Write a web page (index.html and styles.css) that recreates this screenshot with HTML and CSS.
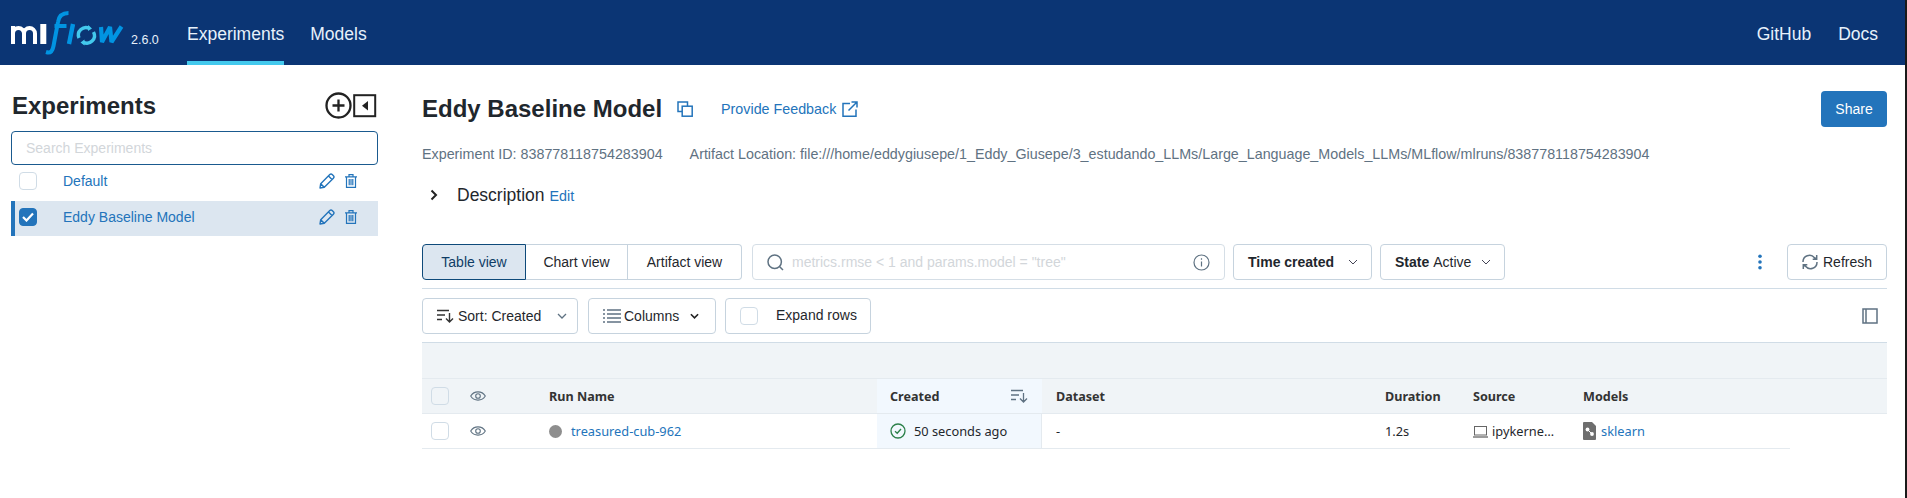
FILE: index.html
```html
<!DOCTYPE html>
<html lang="en">
<head>
<meta charset="utf-8">
<title>MLflow</title>
<link rel="stylesheet" href="styles.css">
</head>
<body>
<div class="page">
<header class="topbar">
  <svg class="logo" width="115" height="46" viewBox="0 0 115 46" fill="none">
    <path d="M2 16V34M2 23.500a5.500 5.500 0 0 1 11 0V34M13 23.500a5.500 5.500 0 0 1 11 0V34" stroke="#fff" stroke-width="4"/>
    <path d="M32.300 14V34" stroke="#fff" stroke-width="6"/>
    <path d="M35 42c5 1.500 6.500-1 7.500-6l4.500-24c1-7 5-9 10.500-9M43.500 16h12" stroke="#0194e2" stroke-width="4"/>
    <path d="M62 14l-4 20" stroke="#0194e2" stroke-width="4.400"/>
    <path d="M68 28a7.500 7.500 0 0 1 10.500-9.500M82.500 22a7.500 7.500 0 0 1-10.500 10" stroke="#43c9ed" stroke-width="3.400"/>
    <path d="M77 15l4 3.500-4 2.500zM73.500 29.500l-4 3 4 3z" fill="#43c9ed"/>
    <path d="M90 17l1 15 8-15 1.500 15 10-15.500" stroke="#0194e2" stroke-width="4.200" stroke-linejoin="bevel"/>
  </svg>
  <span class="version">2.6.0</span>
  <nav class="tabs">
    <a class="tab tab-active">Experiments</a>
    <a class="tab">Models</a>
  </nav>
  <nav class="tabs tabs-right">
    <a class="tab">GitHub</a>
    <a class="tab">Docs</a>
  </nav>
</header>
<div class="app">
  <aside class="sidebar">
    <div class="side-head">
      <h2 class="side-title">Experiments</h2>
      <svg class="side-plus" width="27" height="27" viewBox="0 0 27 27" fill="none" stroke="#222">
        <circle cx="13.500" cy="13.500" r="12" stroke-width="2.300"/>
        <path d="M13.500 7.500v12M7.500 13.500h12" stroke-width="2.300"/>
      </svg>
      <svg class="side-collapse" width="24" height="24" viewBox="0 0 24 24">
        <rect x="1.200" y="1.200" width="21" height="21" fill="none" stroke="#222" stroke-width="2"/>
        <path d="M15 7v9.500L9 11.700z" fill="#222"/>
      </svg>
    </div>
    <div class="side-search">Search Experiments</div>
    <div class="exp-row exp-first">
      <span class="check"></span>
      <a class="exp-name">Default</a>
      <svg class="pencil" width="16" height="16" viewBox="0 0 16 16" fill="none" stroke="#2374bb" stroke-width="1.400" stroke-linejoin="round"><path d="M1 15l.7-4.300L10.800 1.600a1.700 1.700 0 0 1 2.400 0l1.200 1.200a1.700 1.700 0 0 1 0 2.400L5.300 14.300zM1.700 10.700l3.600 3.600M9.500 3l3.500 3.500"/></svg>
      <svg class="trash" width="12" height="14" viewBox="0 0 12 14" fill="none" stroke="#2374bb" stroke-width="1.200"><path d="M0 2.800h12M4 2.800V.7h4v2.100M1.500 2.800V13.300h9V2.800M4.200 5v6.300M6 5v6.300M7.800 5v6.300"/></svg>
    </div>
    <div class="exp-row exp-active">
      <span class="check check-on"><svg width="12" height="10" viewBox="0 0 12 10" fill="none" stroke="#fff" stroke-width="2.200"><path d="M1 5l3.500 3.500L11 1.500"/></svg></span>
      <a class="exp-name">Eddy Baseline Model</a>
      <svg class="pencil" width="16" height="16" viewBox="0 0 16 16" fill="none" stroke="#2374bb" stroke-width="1.400" stroke-linejoin="round"><path d="M1 15l.7-4.300L10.800 1.600a1.700 1.700 0 0 1 2.400 0l1.200 1.200a1.700 1.700 0 0 1 0 2.400L5.300 14.300zM1.700 10.700l3.600 3.600M9.500 3l3.500 3.500"/></svg>
      <svg class="trash" width="12" height="14" viewBox="0 0 12 14" fill="none" stroke="#2374bb" stroke-width="1.200"><path d="M0 2.800h12M4 2.800V.7h4v2.100M1.500 2.800V13.300h9V2.800M4.200 5v6.300M6 5v6.300M7.800 5v6.300"/></svg>
    </div>
  </aside>
  <main class="main">
    <div class="title-row">
      <h1 class="title">Eddy Baseline Model</h1>
      <svg class="copy" width="16" height="16" viewBox="0 0 16 16" fill="none" stroke="#2374bb" stroke-width="1.500"><path d="M10.500 5V1H1v9.500h4"/><rect x="5.200" y="5.200" width="10" height="10"/></svg>
      <a class="feedback">Provide Feedback</a>
      <svg class="ext" width="16" height="16" viewBox="0 0 16 16" fill="none" stroke="#2374bb" stroke-width="1.500"><path d="M8 2.500H1v12.700h13V8.500M6.500 9.500L15 1M9.500 1H15v5.500"/></svg>
      <button class="share">Share</button>
    </div>
    <div class="meta">
      <span>Experiment ID: 838778118754283904</span>
      <span>Artifact Location: file:///home/eddygiusepe/1_Eddy_Giusepe/3_estudando_LLMs/Large_Language_Models_LLMs/MLflow/mlruns/838778118754283904</span>
    </div>
    <div class="desc">
      <svg class="desc-chev" width="8" height="12" viewBox="0 0 8 12" fill="none" stroke="#222" stroke-width="2"><path d="M1.500 1.500L6 6l-4.500 4.500"/></svg>
      <span class="desc-label">Description</span>
      <a class="desc-edit">Edit</a>
    </div>
    <div class="toolbar">
      <div class="segs">
        <span class="seg seg-on">Table view</span>
        <span class="seg">Chart view</span>
        <span class="seg">Artifact view</span>
      </div>
      <div class="filter">
        <svg width="17" height="17" viewBox="0 0 17 17" fill="none" stroke="#5f7282" stroke-width="1.500"><circle cx="7.700" cy="7.700" r="6.700"/><path d="M12.500 12.500L16 16"/></svg>
        <span class="filter-text">metrics.rmse &lt; 1 and params.model = "tree"</span>
        <svg class="filter-info" width="17" height="17" viewBox="0 0 17 17" fill="none" stroke="#5f7282" stroke-width="1.200"><circle cx="8.500" cy="8.500" r="7.500"/><path d="M8.500 7.500v5M8.500 4.300v1.500"/></svg>
      </div>
      <div class="btn btn-time"><b>Time created</b><svg class="chev" width="10" height="6" viewBox="0 0 10 6" fill="none" stroke="#445"><path d="M1 1l4 4 4-4"/></svg></div>
      <div class="btn btn-state"><b>State</b><span>Active</span><svg class="chev" width="10" height="6" viewBox="0 0 10 6" fill="none" stroke="#445"><path d="M1 1l4 4 4-4"/></svg></div>
      <svg class="kebab" width="4" height="16" viewBox="0 0 4 16" fill="#2374bb"><circle cx="2" cy="2.200" r="1.800"/><circle cx="2" cy="8" r="1.800"/><circle cx="2" cy="13.800" r="1.800"/></svg>
      <div class="btn btn-refresh">
        <svg width="16" height="16" viewBox="0 0 16 16" fill="none" stroke="#5f7282" stroke-width="1.500"><path d="M1 8a6.500 6.500 0 0 1 11.500-4.300L14.500 5M15 8a6.500 6.500 0 0 1-11.500 4.300L1.500 11M14.700 1v4.300h-4M1.300 15v-4.300h4"/></svg>
        Refresh
      </div>
    </div>
    <div class="toolbar2">
      <div class="btn btn-sort">
        <svg width="17" height="14" viewBox="0 0 17 14" fill="none" stroke="#333" stroke-width="1.400"><path d="M0 1.500h12M0 6h8M0 10.500h5M12.500 4v9M9 9.500l3.500 3.500 3.500-3.500"/></svg>
        <span class="sort-label">Sort: Created</span>
        <svg class="chev" width="10" height="6" viewBox="0 0 10 6" fill="none" stroke="#5f7282" stroke-width="1.300"><path d="M1 1l4 4 4-4"/></svg>
      </div>
      <div class="btn btn-cols">
        <svg width="18" height="14" viewBox="0 0 18 14" fill="none" stroke="#5f7282" stroke-width="1.500"><path d="M4 1h14M4 5h14M4 9h14M4 13h14M0 1h2M0 5h2M0 9h2M0 13h2"/></svg>
        <span class="cols-label">Columns</span>
        <svg width="9" height="6" viewBox="0 0 10 6" fill="none" stroke="#222" stroke-width="1.800"><path d="M1 1l4 4 4-4"/></svg>
      </div>
      <div class="btn btn-expand">
        <span class="check"></span>
        <span class="expand-label">Expand rows</span>
      </div>
      <svg class="panel" width="16" height="16" viewBox="0 0 16 16" fill="none" stroke="#5f7282" stroke-width="1.500"><rect x="1" y="1" width="14" height="14"/><path d="M4 1v14"/></svg>
    </div>
    <div class="table">
      <div class="band"></div>
      <div class="row row-head">
        <div class="cell"><span class="check check-head"></span></div>
        <div class="cell"><svg class="eye" width="16" height="12" viewBox="0 0 16 12" fill="none" stroke="#5f7282" stroke-width="1.100"><path d="M.7 6C4 .5 12 .5 15.300 6 12 11.500 4 11.500.7 6z"/><circle cx="8" cy="6" r="2.300"/></svg></div>
        <div class="cell cell-h">Run Name</div>
        <div class="cell cell-h cell-created">Created
          <svg class="sort-h" width="17" height="14" viewBox="0 0 17 14" fill="none" stroke="#5f7282" stroke-width="1.300"><path d="M0 1.500h12M0 6h8M0 10.500h5M12.500 4v9M9 9.500l3.500 3.500 3.500-3.500"/></svg>
        </div>
        <div class="cell cell-h cell-ds">Dataset</div>
        <div class="cell cell-h">Duration</div>
        <div class="cell cell-h">Source</div>
        <div class="cell cell-h">Models</div>
      </div>
      <div class="row row-body">
        <div class="cell"><span class="check"></span></div>
        <div class="cell"><svg class="eye" width="16" height="12" viewBox="0 0 16 12" fill="none" stroke="#5f7282" stroke-width="1.100"><path d="M.7 6C4 .5 12 .5 15.300 6 12 11.500 4 11.500.7 6z"/><circle cx="8" cy="6" r="2.300"/></svg></div>
        <div class="cell"><span class="dot"></span><a class="link">treasured-cub-962</a></div>
        <div class="cell cell-created cell-created-b">
          <svg width="16" height="16" viewBox="0 0 16 16" fill="none" stroke="#2b8049" stroke-width="1.300"><circle cx="8" cy="8" r="7"/><path d="M5 8.300l2.200 2L11 6"/></svg>
          <span>50 seconds ago</span>
        </div>
        <div class="cell cell-ds">-</div>
        <div class="cell">1.2s</div>
        <div class="cell">
          <svg class="laptop" width="15" height="13" viewBox="0 0 15 13" fill="none" stroke="#666"><rect x="1.500" y="1.500" width="12" height="8.500"/><path d="M0 12h15" stroke-width="1.300"/></svg>
          <span>ipykerne…</span>
        </div>
        <div class="cell">
          <svg class="model" width="13" height="18" viewBox="0 0 13 18"><path d="M1 0h8l4 4v13a1 1 0 0 1-1 1H1a1 1 0 0 1-1-1V1a1 1 0 0 1 1-1z" fill="#6e6e6e"/><g fill="#fff"><circle cx="4.500" cy="7.500" r="1.900"/><circle cx="9" cy="12" r="1.900"/></g><path d="M4.500 7.500L9 12" stroke="#fff"/></svg>
          <a class="link">sklearn</a>
        </div>
      </div>
    </div>
  </main>
</div>
</div>
</body>
</html>
```

FILE: styles.css
```css
* { box-sizing: border-box; }
html, body { margin: 0; padding: 0; }
body {
  width: 1907px;
  height: 498px;
  overflow: hidden;
  background: #1a1a1a;
  font-family: "Liberation Sans", Arial, sans-serif;
  font-size: 14px;
  color: #1f272d;
}
.page { width: 1905px; height: 498px; background: #fff; }
.topbar {
  height: 65px;
  background: #0b3574;
  display: flex;
  align-items: stretch;
  padding-left: 11px;
  color: #e7f1fb;
}
.logo { margin-top: 10px; }
.version { font-size: 12.500px; margin: 33px 0 0 5px; width: 29px; }
.tabs { display: flex; gap: 26px; margin-left: 27px; }
.tabs-right { margin-left: auto; padding-right: 27px; gap: 27px; }
.tab {
  font-size: 17.500px;
  height: 65px;
  padding-top: 8px;
  display: flex;
  align-items: center;
  border-bottom: 4px solid transparent;
}
.tab-active { border-bottom-color: #43c9ed; }

.app { display: flex; }
.sidebar { width: 422px; padding: 26px 44px 0 11px; flex: none; }
.side-head { display: flex; align-items: center; height: 27px; margin-bottom: 13px; padding-left: 1px; }
.side-title { margin: 0; font-size: 24px; font-weight: 700; line-height: 27px; flex: 1; position: relative; top: 1px; }
.side-plus { margin-right: 1px; margin-top: 2px; }
.side-collapse { margin-right: 1px; margin-top: 2px; }
.side-search {
  height: 34px;
  border: 1px solid #1a5a8f;
  border-radius: 4px;
  padding-left: 14px;
  line-height: 32px;
  color: #d2d6da;
}
.exp-row {
  display: flex;
  align-items: center;
  padding-left: 8px;
}
.exp-first { height: 36px; padding-bottom: 5px; }
.exp-active {
  height: 35px;
  padding-bottom: 3px;
  background: #dce6f0;
  border-left: 4px solid #2374bb;
  padding-left: 4px;
}
.check {
  width: 18px;
  height: 18px;
  border: 1px solid #d0dce6;
  border-radius: 4px;
  background: #fff;
  flex: none;
  display: inline-flex;
  align-items: center;
  justify-content: center;
}
.check-on { background: #2374bb; border-color: #2374bb; }
.exp-name { color: #2374bb; margin-left: 26px; flex: 1; }
.pencil { margin-right: 10px; }
.trash { margin-right: 21px; }

.main { flex: 1; min-width: 0; padding: 26px 18px 0 0; }
.title-row { display: flex; align-items: center; height: 36px; }
.title { margin: 0; font-size: 24px; font-weight: 700; }
.copy { margin-left: 15px; }
.feedback { color: #2374bb; margin-left: 28px; font-size: 14.300px; }
.ext { margin-left: 6px; }
.share {
  margin-left: auto;
  width: 66px;
  height: 36px;
  border: 0;
  border-radius: 4px;
  background: #2374bb;
  color: #fff;
  font: 14px "Liberation Sans", Arial, sans-serif;
}
.meta {
  display: flex;
  gap: 27px;
  margin-top: 19px;
  height: 16px;
  line-height: 16px;
  color: #5f7282;
  font-size: 14.300px;
  white-space: nowrap;
}
.desc { display: flex; align-items: center; height: 24px; margin-top: 21px; padding-left: 8px; }
.desc-label { font-size: 17.500px; margin-left: 19px; }
.desc-edit { color: #2374bb; margin-left: 5px; font-size: 14.300px; position: relative; top: 1px; }
.toolbar {
  display: flex;
  align-items: center;
  height: 45px;
  padding-bottom: 8px;
  margin-top: 37px;
  border-bottom: 1px solid #d0dce6;
}
.segs { display: flex; height: 36px; border-radius: 4px; }
.seg {
  display: flex;
  align-items: center;
  justify-content: center;
  border: 1px solid #c6d3de;
  border-left-width: 0;
}
.seg:nth-child(1) { width: 104px; border-left-width: 1px; border-radius: 4px 0 0 4px; }
.seg:nth-child(2) { width: 102px; }
.seg:nth-child(3) { width: 114px; border-radius: 0 4px 4px 0; }
.seg-on { background: #dce6f0; border-color: #0e4a7a; color: #0f3d66; }
.filter {
  width: 473px;
  height: 36px;
  margin-left: 10px;
  border: 1px solid #d5dee6;
  border-radius: 4px;
  display: flex;
  align-items: center;
  padding: 0 14px 0 14px;
}
.filter-text { flex: 1; color: #d2d6da; margin-left: 8px; }
.btn {
  height: 36px;
  border: 1px solid #c6d3de;
  border-radius: 4px;
  display: flex;
  align-items: center;
  flex: none;
  background: #fff;
}
.btn-time { width: 139px; margin-left: 8px; padding-left: 14px; }
.btn-state { width: 125px; margin-left: 8px; padding-left: 14px; }
.btn-state b { margin-right: 4px; }
.chev { margin-left: auto; margin-right: 13px; flex: none; }
.kebab { margin-left: auto; margin-right: 25px; }
.btn-refresh { width: 100px; padding-left: 14px; gap: 5px; }
.toolbar2 { display: flex; align-items: center; height: 35px; margin-top: 9px; }
.btn-sort { width: 156px; padding-left: 14px; }
.sort-label { margin-left: 4px; }
.btn-sort .chev { margin-right: 10px; }
.btn-cols { width: 128px; margin-left: 10px; padding-left: 14px; }
.cols-label { margin-left: 3px; margin-right: 11px; }
.btn-expand { width: 146px; margin-left: 9px; padding-left: 14px; }
.expand-label { margin-left: 18px; position: relative; top: -1px; }
.panel { margin-left: auto; margin-right: 9px; }
.table { margin-top: 9px; font-family: "Noto Sans", sans-serif; font-size: 12.800px; }
.band { height: 36px; background: #f0f4f7; border-top: 1px solid #d0dce6; }
.row {
  display: grid;
  grid-template-columns: 48px 69px 338px 165px 333px 88px 110px 217px;
  height: 36px;
}
.row-head { background: #f0f4f7; border-top: 1px solid #e4eaef; border-bottom: 1px solid #e4eaef; }
.row-body { width: 1368px; height: 35px; border-bottom: 1px solid #e4eaef; }
.cell { display: flex; align-items: center; padding-left: 10px; white-space: nowrap; }
.cell:first-child { padding-left: 9px; }
.cell:nth-child(2) { padding-left: 0; }
.cell-h { font-weight: 700; color: #333; font-size: 12.600px; }
.cell-created { background: #f2f8fe; padding-left: 13px; }
.cell-created-b { gap: 8px; border-right: 1px solid #e4eaef; }
.cell-ds { padding-left: 14px; }
.check-head { background: #f0f4f7; }
.sort-h { margin-left: auto; margin-right: 14px; }
.dot { width: 13px; height: 13px; border-radius: 50%; background: #8e8e8e; margin-right: 9px; }
.link { color: #2374bb; }
.laptop { margin-right: 4px; }
.model { margin-right: 5px; }
```
